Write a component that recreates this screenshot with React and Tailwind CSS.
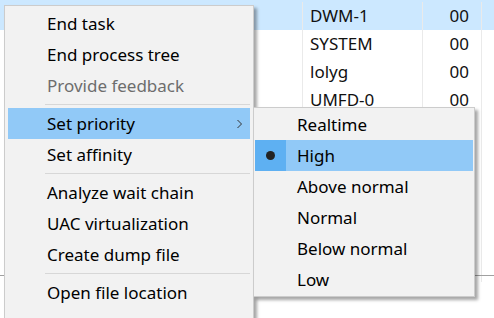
import { useState } from 'react';

const rows = [
  { user: 'DWM-1', cpu: '00', selected: true },
  { user: 'SYSTEM', cpu: '00' },
  { user: 'lolyg', cpu: '00' },
  { user: 'UMFD-0', cpu: '00' },
  { user: 'UMFD-1', cpu: '00' },
  { user: 'SYSTEM', cpu: '00' },
  { user: 'SYSTEM', cpu: '00' },
  { user: 'SYSTEM', cpu: '00' },
  { user: 'SYSTEM', cpu: '00' },
  { user: 'SYSTEM', cpu: '00' },
];

const mainItems = [
  { label: 'End task' },
  { label: 'End process tree' },
  { label: 'Provide feedback', disabled: true },
  { sep: true },
  { label: 'Set priority', sub: true, active: true },
  { label: 'Set affinity' },
  { sep: true },
  { label: 'Analyze wait chain' },
  { label: 'UAC virtualization' },
  { label: 'Create dump file' },
  { sep: true },
  { label: 'Open file location' },
  { label: 'Search online' },
];

const priorities = ['Realtime', 'High', 'Above normal', 'Normal', 'Below normal', 'Low'];

function Separator() {
  return (
    <div className="h-[7px] pt-[3px] pl-[37px]">
      <div className="h-px bg-[#d7d7d7]" />
    </div>
  );
}

function Chevron() {
  return (
    <svg width="7" height="10" viewBox="0 0 7 10" className="text-[#333]">
      <polyline points="1.5,1 5.5,5 1.5,9" fill="none" stroke="currentColor" strokeWidth="1" />
    </svg>
  );
}

export default function App() {
  const [priority] = useState('High');

  return (
    <div className="relative w-[494px] h-[318px] overflow-hidden bg-white font-['Noto_Sans',sans-serif] text-[17px] text-black">
      {/* Process list behind the menus */}
      <div className="flex flex-col pt-[2px]">
        {rows.map((r, i) => (
          <div
            key={i}
            className={`flex h-[28px] items-center ${r.selected ? 'bg-[#cce8ff] -mt-[2px] h-[30px] pt-[2px]' : ''}`}
          >
            <div className="w-[302px] h-full" />
            <div className="w-[120px] h-full border-l border-[#eaeaea] pl-[7px] leading-[28px] text-[#111]">
              {r.user}
            </div>
            <div className="w-[60px] h-full border-l border-r border-[#eaeaea] pr-[12px] text-right leading-[28px] text-[#111]">
              {r.cpu}
            </div>
          </div>
        ))}
      </div>
      <div className="absolute left-0 right-0 top-[275px] h-px bg-[#a0a0a0]" />

      {/* Context menu */}
      <div className="absolute left-[4px] top-[5px] w-[250px] h-[340px] bg-[#f2f2f2] border border-[#cccccc] pt-[2px] px-[3px] shadow-[3px_3px_3px_rgba(0,0,0,0.35)]">
        {mainItems.map((it, i) =>
          it.sep ? (
            <Separator key={i} />
          ) : (
            <div
              key={i}
              className={`flex h-[31px] items-center justify-between pl-[39px] pr-[7px] ${
                it.active ? 'bg-[#91c9f7]' : ''
              } ${it.disabled ? 'text-[#6d6d6d]' : 'text-black'}`}
            >
              <span>{it.label}</span>
              {it.sub && <Chevron />}
            </div>
          )
        )}
      </div>

      {/* Priority submenu */}
      <div className="absolute left-[253px] top-[107px] w-[222px] bg-[#f2f2f2] border border-[#cccccc] py-[1px] px-px shadow-[3px_3px_3px_rgba(0,0,0,0.35)]">
        {priorities.map((p) => {
          const on = p === priority;
          return (
            <div key={p} className={`flex h-[31px] items-center ${on ? 'bg-[#91c9f7]' : ''}`}>
              <div className={`flex w-[31px] h-full items-center justify-center ${on ? 'bg-[#5eb0f2]' : ''}`}>
                {on && <div className="w-[9px] h-[9px] rounded-full bg-[#222]" />}
              </div>
              <span className="pl-[11px]">{p}</span>
            </div>
          );
        })}
      </div>
    </div>
  );
}
